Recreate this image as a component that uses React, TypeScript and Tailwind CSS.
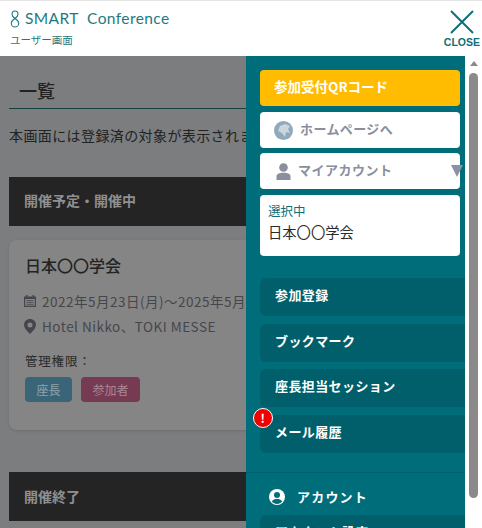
import React from "react";

const sans = "font-['Noto_Sans_CJK_JP','Noto_Sans',sans-serif]";

const navItems = ["参加登録", "ブックマーク", "座長担当セッション", "メール履歴"];

const Header = () => (
  <header className="h-14 shrink-0 bg-white border-t border-[#e4e4e4] flex justify-between pl-[10px] pr-[2px]">
    <div>
      <div className="flex items-center mt-[7px] h-[22px] text-[#1f7a80]">
        <svg width="10" height="18" viewBox="0 0 10 18" fill="none" stroke="currentColor" strokeWidth="1.1">
          <path d="M5 8.5C2.8 7 2 5.800 2 4.300C2 2.500 3.300 1 5 1C6.700 1 8 2.500 8 4.300C8 5.800 7.200 7 5 8.500C2.500 10 1.300 11.500 1.300 13.200C1.300 15.300 3 17 5 17C7 17 8.700 15.300 8.700 13.200C8.700 11.500 7.500 10 5 8.500Z" />
        </svg>
        <span className="ml-[5px] text-[15.5px] font-['Lato',sans-serif] tracking-[0.4px] whitespace-pre">SMART  Conference</span>
      </div>
      <div className={`${sans} text-[10.5px] leading-[14px] mt-[3px] text-[#1f7a80]`}>ユーザー画面</div>
    </div>
    <div className="flex flex-col items-center mt-[9px] text-[#0f6e78]">
      <svg width="24" height="24" viewBox="0 0 24 24" stroke="currentColor" strokeWidth="2" fill="none">
        <path d="M1 1L23 23M23 1L1 23" />
      </svg>
      <span className="font-['Liberation_Sans',sans-serif] font-bold text-[10.5px] leading-[12px] mt-[2px]">CLOSE</span>
    </div>
  </header>
);

const MainContent = () => (
  <main className={`${sans} w-[246px] shrink-0 overflow-hidden bg-[#7c7d7e] pl-[9px]`}>
    <div className="w-[300px]">
      <h1 className="h-[53px] border-b border-[#123f40] pl-[10px] pt-[21px] text-[18px] leading-[26px] font-medium text-[#222]">一覧</h1>
      <p className="mt-[16px] text-[14px] tracking-[0.4px] leading-[20px] text-[#222] whitespace-nowrap">本画面には登録済の対象が表示されます</p>
      <div className="mt-[32px] h-[49px] bg-[#242424] pl-[15px] pb-[3px] flex items-center text-[14px] font-bold text-[#8f8f8f]">開催予定・開催中</div>
      <section className="mt-[14px] h-[190px] rounded-[8px] bg-[#858585] pl-[16px] pt-[13px] shadow-[0_1px_3px_rgba(0,0,0,0.12)]">
        <h2 className="text-[16px] leading-[24px] font-medium text-[#232323]">日本〇〇学会</h2>
        <div className="mt-[14px] flex items-center text-[13.5px] leading-[20px] tracking-[0.5px] text-[#45464b] whitespace-nowrap">
          <svg width="12" height="12" viewBox="0 0 12 12" fill="currentColor" className="ml-[-1px] mr-[6px] shrink-0">
            <path d="M2 0h1.500v1.500h5V0H10v1.500h2V12H0V1.500h2ZM1.200 4v6.800h9.600V4Z" />
            <path d="M2.500 5h7v1.200h-7ZM2.500 7h7v1.200h-7ZM2.500 9h7v.9h-7Z" opacity="0.7" />
          </svg>
          2022年5月23日(月)～2025年5月
        </div>
        <div className="mt-[5px] flex items-center text-[13.5px] leading-[20px] tracking-[0.5px] text-[#45464b] whitespace-nowrap">
          <svg width="12" height="15" viewBox="0 0 12 15" className="ml-[-1px] mr-[6px] shrink-0">
            <path fillRule="evenodd" fill="currentColor" d="M6 0C2.700 0 0 2.600 0 5.800C0 9.800 6 15 6 15C6 15 12 9.800 12 5.800C12 2.600 9.300 0 6 0ZM6 3.400A2.500 2.500 0 1 1 6 8.400A2.500 2.500 0 1 1 6 3.400Z" />
          </svg>
          Hotel Nikko、TOKI MESSE
        </div>
        <div className="mt-[15px] text-[12.5px] leading-[20px] tracking-[0.8px] text-[#2a2a2a]">管理権限：</div>
        <div className="mt-[6px] flex gap-[9px]">
          <span className="w-[47px] h-[25px] rounded-[4px] bg-[#3a6579] text-[#8fa3ad] text-[12px] flex items-center justify-center">座長</span>
          <span className="w-[59px] h-[25px] rounded-[4px] bg-[#763a53] text-[#a88995] text-[12px] flex items-center justify-center">参加者</span>
        </div>
      </section>
      <div className="mt-[42px] h-[49px] bg-[#242424] pl-[15px] pb-[1px] flex items-center text-[14px] font-bold text-[#8f8f8f]">開催終了</div>
    </div>
  </main>
);

const NavItem = ({ label, alert }: { label: string; alert?: boolean }) => (
  <div className="relative h-[38px] mb-[7.500px] rounded-l-[6px] bg-[#005f6b] pl-[15px] pb-[4px] flex items-center text-[13px] font-bold tracking-[0.4px] text-white">
    {alert && (
      <span className="absolute left-[-7px] top-[-7px] w-[20px] h-[20px] rounded-full bg-[#f00000] border border-white text-white text-[12px] font-bold flex items-center justify-center">!</span>
    )}
    {label}
  </div>
);

const Sidebar = () => (
  <aside className={`${sans} relative flex-1 overflow-hidden bg-[#006d7a] pl-[14px] pt-[14px]`}>
    <div className="w-[200px] h-[36px] rounded-[4px] bg-[#ffbc00] pl-[14px] pb-[3px] flex items-center text-[13.5px] font-bold text-white">参加受付QRコード</div>
    <div className="mt-[6px] w-[200px] h-[36px] rounded-[4px] bg-white pl-[14px] pb-[3px] flex items-center text-[13px] font-bold tracking-[0.4px] text-[#8a8f9d]">
      <svg width="19" height="19" viewBox="0 0 19 19" className="mr-[7px] mt-[3px]">
        <circle cx="9.500" cy="9.500" r="9.500" fill="#8fa9bd" />
        <path d="M6 5L11 3L16 5L14 8L16 12L12 11L11 16L8 12L4 10Z" fill="#cdd6dc" />
      </svg>
      ホームページへ
    </div>
    <div className="relative mt-[5px] w-[200px] h-[36px] rounded-[4px] bg-white pl-[16px] pb-[2px] flex items-center text-[13px] font-bold tracking-[0.5px] text-[#8a8f9d]">
      <svg width="15" height="17" viewBox="0 0 15 17" fill="currentColor" className="mr-[7px] mt-[2px]">
        <circle cx="7.500" cy="4.500" r="4.300" />
        <path d="M0.500 17V13.500C0.500 11 3 9.800 7.500 9.800C12 9.800 14.500 11 14.500 13.500V17Z" />
      </svg>
      マイアカウント
      <span className="absolute left-[191px] top-[12px] w-0 h-0 border-x-[6px] border-x-transparent border-t-[12px] border-t-[#8a93a6]" />
    </div>
    <div className="mt-[6px] mb-[22px] w-[200px] h-[61px] rounded-[4px] bg-white pl-[8px] pt-[7px]">
      <div className="text-[12.5px] leading-[18px] text-[#0f6e78]">選択中</div>
      <div className="mt-[1px] text-[14.3px] leading-[22px] text-[#2b2b2b]">日本〇〇学会</div>
    </div>
    {navItems.map((label) => (
      <NavItem key={label} label={label} alert={label === "メール履歴"} />
    ))}
    <div className="mt-[19px] -ml-[14px] border-t border-[#005f6b]" />
    <div className="mt-[14px] pl-[9px] flex items-center text-[13px] font-bold tracking-[1.2px] text-white h-[20px]">
      <svg width="16" height="16" viewBox="0 0 16 16" className="mr-[12px]">
        <circle cx="8" cy="8" r="8" fill="#fff" />
        <circle cx="8" cy="6" r="3" fill="#006d7a" />
        <path d="M2.800 12.500C4 10.500 6 10 8 10C10 10 12 10.500 13.200 12.500C12 14 10 15 8 15C6 15 4 14 2.800 12.500Z" fill="#006d7a" />
      </svg>
      アカウント
    </div>
    <div className="mt-[8px] h-[38px] rounded-l-[6px] bg-[#005f6b] pl-[15px] pt-[7px] leading-[20px] text-[13px] font-bold tracking-[0.4px] text-white">アカウント設定</div>
  </aside>
);

const Scrollbar = () => (
  <div className="w-[17px] shrink-0 bg-white flex flex-col items-center pt-[5px]">
    <span className="w-0 h-0 border-x-[4.500px] border-x-transparent border-b-[5px] border-b-[#8b898b]" />
    <span className="mt-[7px] w-[9px] h-[425px] rounded-full bg-[#8b898b]" />
  </div>
);

export default function App() {
  return (
    <div className="w-[482px] h-[528px] overflow-hidden flex flex-col bg-white">
      <Header />
      <div className="flex flex-1 min-h-0">
        <MainContent />
        <Sidebar />
        <Scrollbar />
      </div>
    </div>
  );
}
